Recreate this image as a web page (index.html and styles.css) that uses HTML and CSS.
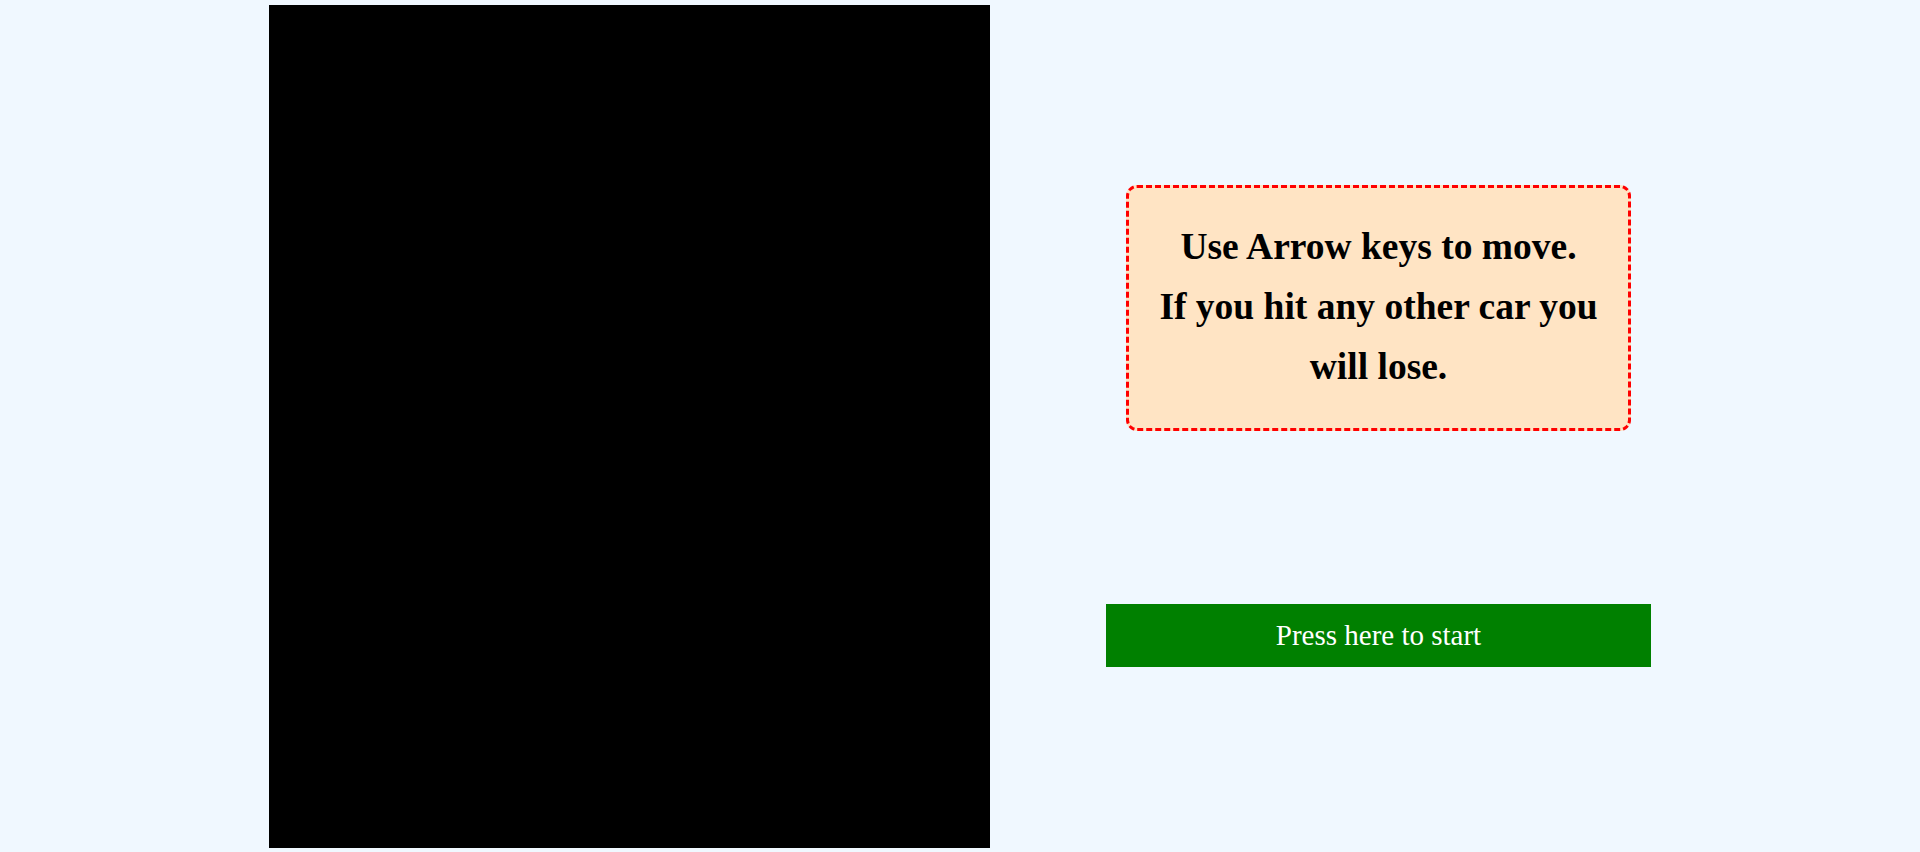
FILE: index.html
```html
<!DOCTYPE html>
<html>
<head>
<meta charset="utf-8">
<link rel="stylesheet" href="styles.css">
</head>
<body>
<div class="page">
  <div class="game-canvas"></div>
  <div class="side">
    <div class="instructions">
      <p>Use Arrow keys to move.<br>If you hit any other car you will lose.</p>
    </div>
    <button class="start-btn">Press here to start</button>
  </div>
</div>
</body>
</html>
```
FILE: styles.css
```css
html, body {
  margin: 0;
  padding: 0;
  background: #f0f8ff;
  font-family: "Liberation Serif", "Times New Roman", serif;
  overflow: hidden;
}
.page {
  display: flex;
  height: 852px;
  padding-left: 269px;
  box-sizing: border-box;
}
.game-canvas {
  width: 721px;
  height: 843px;
  margin-top: 5px;
  background: #000;
  flex: none;
}
.side {
  width: 777px;
  display: flex;
  flex-direction: column;
  align-items: center;
}
.instructions {
  margin-top: 185px;
  width: 505px;
  height: 246px;
  box-sizing: border-box;
  background: #ffe4c4;
  border: 3px dashed #ff0000;
  border-radius: 11px;
  padding: 29px 26px;
  text-align: center;
}
.instructions p {
  margin: 0;
  font-size: 37.5px;
  font-weight: bold;
  line-height: 60px;
  color: #000;
}
.start-btn {
  margin-top: 173px;
  width: 545px;
  height: 63px;
  background: #008000;
  color: #fff;
  border: none;
  font-family: "Liberation Serif", "Times New Roman", serif;
  font-size: 29px;
  padding: 0;
}
```
